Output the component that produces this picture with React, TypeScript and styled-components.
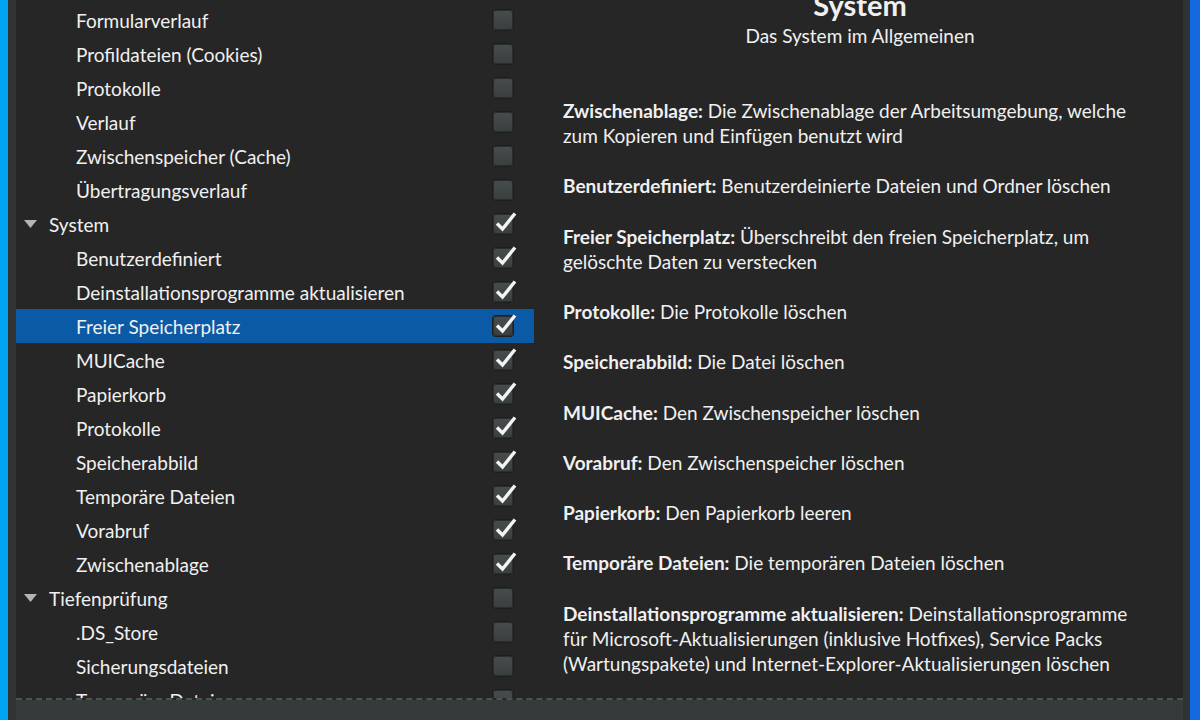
import React from "react";
import styled, { createGlobalStyle } from "styled-components";

const Global = createGlobalStyle`
  html, body { margin: 0; padding: 0; background: #00a4f4; }
  body { font-family: Lato, "Noto Sans", "DejaVu Sans", sans-serif; overflow: hidden; }
  * { box-sizing: border-box; }
`;

const Desktop = styled.div`
  display: flex;
  width: 1200px;
  height: 720px;
  overflow: hidden;
`;

const DesktopEdge = styled.div<{ $w: number; $c: string }>`
  width: ${(p) => p.$w}px;
  flex: none;
  background: ${(p) => p.$c};
`;

const Window = styled.div`
  flex: 1;
  display: flex;
  flex-direction: column;
  background: #2f3332;
  padding: 0 7px 0 8px;
`;

const Main = styled.div`
  height: 700px;
  flex: none;
  display: flex;
  background: #262626;
  border-bottom: 2px dashed #505252;
  overflow: hidden;
`;

const StatusBar = styled.div`
  flex: 1;
  background: #353a3a;
`;

const List = styled.div`
  width: 518px;
  flex: none;
  padding-top: 3px;
  overflow: hidden;
`;

const Row = styled.div<{ $selected?: boolean }>`
  height: 34px;
  display: flex;
  align-items: center;
  padding-right: 21px;
  background: ${(p) => (p.$selected ? "#0b5aa6" : "transparent")};
`;

const Arrow = styled.span`
  width: 33px;
  flex: none;
  display: flex;
  justify-content: flex-start;
  padding-left: 8px;
`;

const Label = styled.span<{ $level: number }>`
  flex: 1;
  padding-left: ${(p) => (p.$level === 0 ? 0 : 60)}px;
  color: #f0f0f0;
  font-size: 19px;
  white-space: nowrap;
`;

const Box = styled.span`
  position: relative;
  width: 20px;
  height: 20px;
  flex: none;
  border-radius: 3px;
  background: linear-gradient(#474c4c, #393e3e);
  box-shadow: inset 0 0 0 1px #2a2e2e, 0 0 0 1px #1d1f1f;
`;

const Check = styled.svg`
  position: absolute;
  left: 0;
  top: -4px;
  width: 26px;
  height: 24px;
  overflow: visible;
`;

const Details = styled.div`
  flex: 1;
  padding: 0 12px 0 29px;
  color: #f0f0f0;
  font-size: 19px;
  overflow: hidden;
`;

const Title = styled.div`
  margin-top: -11px;
  padding-right: 14px;
  text-align: center;
  font-weight: 700;
  font-size: 29px;
  line-height: 32px;
`;

const Subtitle = styled.div`
  margin-top: 2px;
  padding-right: 14px;
  text-align: center;
  line-height: 25px;
  margin-bottom: 50px;
`;

const Para = styled.p`
  margin: 0 0 25.14px;
  line-height: 25.14px;
  white-space: nowrap;
`;

const Line = styled.span`
  display: block;
`;

type Item = { label: string; level: number; checked?: boolean; selected?: boolean };

const items: Item[] = [
  { label: "Formularverlauf", level: 1 },
  { label: "Profildateien (Cookies)", level: 1 },
  { label: "Protokolle", level: 1 },
  { label: "Verlauf", level: 1 },
  { label: "Zwischenspeicher (Cache)", level: 1 },
  { label: "Übertragungsverlauf", level: 1 },
  { label: "System", level: 0, checked: true },
  { label: "Benutzerdefiniert", level: 1, checked: true },
  { label: "Deinstallationsprogramme aktualisieren", level: 1, checked: true },
  { label: "Freier Speicherplatz", level: 1, checked: true, selected: true },
  { label: "MUICache", level: 1, checked: true },
  { label: "Papierkorb", level: 1, checked: true },
  { label: "Protokolle", level: 1, checked: true },
  { label: "Speicherabbild", level: 1, checked: true },
  { label: "Temporäre Dateien", level: 1, checked: true },
  { label: "Vorabruf", level: 1, checked: true },
  { label: "Zwischenablage", level: 1, checked: true },
  { label: "Tiefenprüfung", level: 0 },
  { label: ".DS_Store", level: 1 },
  { label: "Sicherungsdateien", level: 1 },
  { label: "Temporäre Dateien", level: 1 },
];

const paras: { b: string; lines: string[] }[] = [
  { b: "Zwischenablage:", lines: [" Die Zwischenablage der Arbeitsumgebung, welche", "zum Kopieren und Einfügen benutzt wird"] },
  { b: "Benutzerdefiniert:", lines: [" Benutzerdeinierte Dateien und Ordner löschen"] },
  { b: "Freier Speicherplatz:", lines: [" Überschreibt den freien Speicherplatz, um", "gelöschte Daten zu verstecken"] },
  { b: "Protokolle:", lines: [" Die Protokolle löschen"] },
  { b: "Speicherabbild:", lines: [" Die Datei löschen"] },
  { b: "MUICache:", lines: [" Den Zwischenspeicher löschen"] },
  { b: "Vorabruf:", lines: [" Den Zwischenspeicher löschen"] },
  { b: "Papierkorb:", lines: [" Den Papierkorb leeren"] },
  { b: "Temporäre Dateien:", lines: [" Die temporären Dateien löschen"] },
  {
    b: "Deinstallationsprogramme aktualisieren:",
    lines: [
      " Deinstallationsprogramme",
      "für Microsoft-Aktualisierungen (inklusive Hotfixes), Service Packs",
      "(Wartungspakete) und Internet-Explorer-Aktualisierungen löschen",
    ],
  },
];

const Triangle = () => (
  <svg width="13" height="8" viewBox="0 0 13 8">
    <path d="M0 0 L13 0 L6.5 8 Z" fill="#b4b4b4" />
  </svg>
);

const CheckBox = ({ checked }: { checked?: boolean }) => (
  <Box>
    {checked && (
      <Check viewBox="0 0 26 24">
        <path d="M4 13.5 L9.5 19 L22 3.5" fill="none" stroke="#f4f4f4" strokeWidth="3.4" strokeLinejoin="miter" />
      </Check>
    )}
  </Box>
);

export default function App() {
  return (
    <>
      <Global />
      <Desktop>
        <DesktopEdge $w={8} $c="#00a4f4" />
        <Window>
          <Main>
            <List>
              {items.map((it, i) => (
                <Row key={i} $selected={it.selected}>
                  {it.level === 0 && (
                    <Arrow>
                      <Triangle />
                    </Arrow>
                  )}
                  <Label $level={it.level}>{it.label}</Label>
                  <CheckBox checked={it.checked} />
                </Row>
              ))}
            </List>
            <Details>
              <Title>System</Title>
              <Subtitle>Das System im Allgemeinen</Subtitle>
              {paras.map((p, i) => (
                <Para key={i}>
                  <Line>
                    <b>{p.b}</b>
                    {p.lines[0]}
                  </Line>
                  {p.lines.slice(1).map((l, j) => (
                    <Line key={j}>{l}</Line>
                  ))}
                </Para>
              ))}
            </Details>
          </Main>
          <StatusBar />
        </Window>
        <DesktopEdge $w={10} $c="#1469df" />
      </Desktop>
    </>
  );
}
